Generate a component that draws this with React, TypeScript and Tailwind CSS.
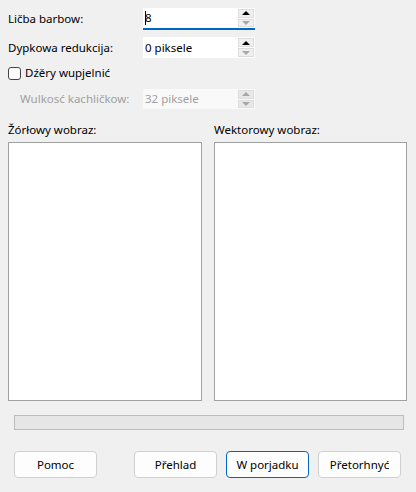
import React from "react";

function Spin({ value, disabled, focused, downDisabled }: { value: string; disabled?: boolean; focused?: boolean; downDisabled?: boolean }) {
  const upColor = disabled ? "border-b-[#a8a8a8]" : "border-b-[#000000]";
  const downColor = disabled || downDisabled ? "border-t-[#a8a8a8]" : "border-t-[#000000]";
  return (
    <div
      className={
        "relative flex items-stretch w-[112px] h-full " +
        (disabled ? "bg-[#f9f9f9]" : "bg-white") +
        (focused ? " border-b-2 border-b-[#0067c0]" : "")
      }
    >
      <div className={"flex-1 flex items-center pl-[2px] " + (disabled ? "text-[#a0a0a0]" : "text-black")}>
        {focused && <span className="w-px h-[14px] bg-black -mr-px"></span>}
        <span>{value}</span>
      </div>
      <div className="flex flex-col w-[16px] py-px gap-px mr-px">
        <div className={"flex-1 flex items-center justify-center border " + (disabled ? "bg-[#e8e8e8] border-[#dedede]" : "bg-[#f0f0f0] border-[#dcdcdc]")}>
          <span className={"w-0 h-0 border-l-[4px] border-r-[4px] border-b-[4px] border-l-transparent border-r-transparent " + upColor}></span>
        </div>
        <div className={"flex-1 flex items-center justify-center border " + (disabled ? "bg-[#e8e8e8] border-[#dedede]" : "bg-[#f0f0f0] border-[#dcdcdc]")}>
          <span className={"w-0 h-0 border-l-[4px] border-r-[4px] border-t-[4px] border-l-transparent border-r-transparent " + downColor}></span>
        </div>
      </div>
    </div>
  );
}

function Btn({ label, primary }: { label: string; primary?: boolean }) {
  return (
    <button
      className={
        "w-[83px] h-[27px] rounded-[4px] bg-[#fdfdfd] text-black text-[11.5px] flex items-center justify-center border " +
        (primary ? "border-[#0067c0]" : "border-[#d0d0d0]")
      }
    >
      {label}
    </button>
  );
}

export default function App() {
  return (
    <div
      className="w-[416px] h-[492px] bg-[#f0f0f0] text-[11.5px] text-black flex flex-col overflow-hidden"
      style={{ fontFamily: '"Noto Sans", "Open Sans", sans-serif' }}
    >
      <div className="flex items-center h-[22px] mt-[8px] pl-[8px]">
        <span className="w-[135px]">Ličba barbow:</span>
        <Spin value="8" focused downDisabled />
      </div>
      <div className="flex items-center h-[21px] mt-[7px] pl-[8px]">
        <span className="w-[135px]">Dypkowa redukcija:</span>
        <Spin value="0 piksele" downDisabled />
      </div>
      <div className="flex items-center h-[14px] mt-[8px] pl-[8px] gap-[4px]">
        <span className="w-[13px] h-[13px] rounded-[3px] border border-[#444444] bg-white"></span>
        <span>Dźěry wupjelnić</span>
      </div>
      <div className="flex items-center h-[20px] mt-[9px] pl-[20px]">
        <span className="w-[123px] text-[#a0a0a0]">Wulkosć kachličkow:</span>
        <Spin value="32 piksele" disabled />
      </div>
      <div className="flex mt-[13px] px-[8px] gap-[12px]">
        <div className="flex flex-col w-[194px]">
          <span className="h-[16px] leading-[16px]">Žórłowy wobraz:</span>
          <div className="mt-[4px] h-[259px] bg-white border border-[#a0a0a0]"></div>
        </div>
        <div className="flex flex-col w-[193px]">
          <span className="h-[16px] leading-[16px]">Wektorowy wobraz:</span>
          <div className="mt-[4px] h-[259px] bg-white border border-[#a0a0a0]"></div>
        </div>
      </div>
      <div className="mx-[14px] mr-[12px] mt-[14px] h-[15px] bg-[#e6e6e6] border border-[#bcbcbc]"></div>
      <div className="flex mt-[21px] pl-[14px]">
        <Btn label="Pomoc" />
        <div className="flex gap-[9px] ml-[37px]">
          <Btn label="Přehlad" />
          <Btn label="W porjadku" primary />
          <Btn label="Přetorhnyć" />
        </div>
      </div>
    </div>
  );
}
